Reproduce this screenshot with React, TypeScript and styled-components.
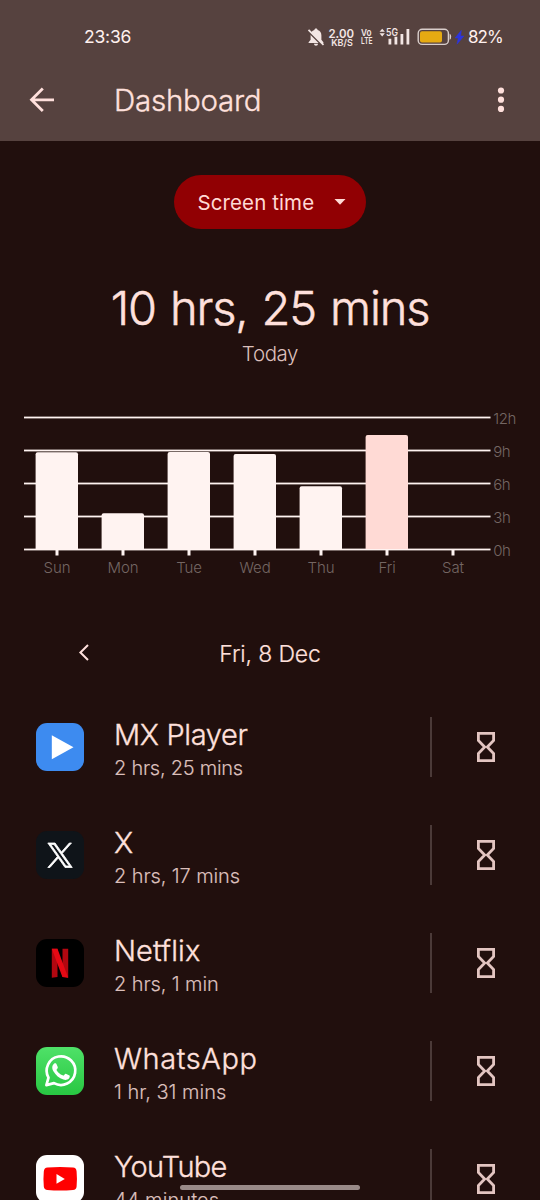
import React from "react";
import styled, { createGlobalStyle } from "styled-components";

const c = {
  bg: "#210f0d",
  bar: "#56423f",
  text: "#ffe0dc",
  sub: "#dbbfbb",
  grey: "#746663",
  line: "#fff3f1",
  red: "#910003",
};

const GlobalStyle = createGlobalStyle`
  * { box-sizing: border-box; }
  html, body { margin: 0; background: ${c.bg}; overflow: hidden; }
  button { border: 0; padding: 0; background: none; color: inherit; font: inherit; display: block; }
  svg { display: block; }
`;

const Screen = styled.div`
  width: 540px;
  height: 1200px;
  overflow: hidden;
  display: flex;
  flex-direction: column;
  background: ${c.bg};
  color: ${c.text};
  font-family: Inter, Roboto, sans-serif;
  font-weight: 340;
`;

const Label = styled.span<{ $size: number; $spacing?: number; $weight?: number }>`
  font-size: ${(p) => p.$size}px;
  letter-spacing: ${(p) => p.$spacing ?? 0}px;
  font-weight: ${(p) => p.$weight ?? 340};
  white-space: nowrap;
`;

const Header = styled.header`
  height: 141px;
  flex: none;
  background: ${c.bar};
`;

const StatusBar = styled.div`
  height: 73px;
  padding-left: 84px;
  display: grid;
  grid-template-columns: 221px 160px auto;
  align-items: center;
  color: #fff0ee;
`;

const Percent = styled.div`
  padding-left: 3px;
`;

const AppBar = styled.div`
  height: 54px;
  padding: 0 24px;
  display: flex;
  align-items: center;
`;

const Title = styled.h1`
  margin: 0 auto 0 54px;
  font-size: 29.5px;
  line-height: 36px;
  font-weight: 340;
  letter-spacing: -0.25px;
  -webkit-text-stroke: 0.35px currentColor;
`;

const Picker = styled.button`
  && {
    display: flex;
    align-items: center;
    justify-content: space-between;
    width: 192px;
    height: 54px;
    margin: 33.5px auto 0 174px;
    padding: 1px 20px 0 23.5px;
    border-radius: 27px;
    background: ${c.red};
    color: #ffdad5;
    flex: none;
  }
`;

const Summary = styled.section`
  display: flex;
  flex-direction: column;
  align-items: center;
  margin-top: 48.5px;
  height: 101px;
  flex: none;
`;

const Total = styled.div`
  font-size: 47px;
  line-height: 61px;
  letter-spacing: -1.15px;
  word-spacing: 2px;
  white-space: nowrap;
  -webkit-text-stroke: 0.5px currentColor;
`;

const Caption = styled.div`
  margin-top: 1px;
  font-size: 20.5px;
  line-height: 30px;
  letter-spacing: -0.4px;
  color: ${c.sub};
`;

const Chart = styled.svg`
  margin-top: 22px;
  flex: none;
  font-size: 15px;
  fill: ${c.grey};
`;

const DayNav = styled.nav`
  height: 66px;
  margin-top: 40px;
  padding: 0 72px;
  display: grid;
  grid-template-columns: 24px 1fr 24px;
  align-items: center;
  justify-items: center;
  flex: none;
`;

const DayLabel = styled.div`
  padding-top: 2px;
  font-size: 23px;
  letter-spacing: -0.15px;
  white-space: nowrap;
  -webkit-text-stroke: 0.2px currentColor;
`;

const List = styled.ul`
  list-style: none;
  margin: 7px 0 0;
  padding: 0;
`;

const Row = styled.li`
  height: 108px;
  padding-left: 36px;
  display: flex;
  align-items: center;
`;

const Names = styled.div`
  margin-left: 30px;
  padding-top: 6px;
  width: 316px;
  display: flex;
  flex-direction: column;
`;

const Name = styled.div<{ $spacing: number }>`
  font-size: 29px;
  line-height: 36px;
  letter-spacing: ${(p) => p.$spacing}px;
  -webkit-text-stroke: 0.35px currentColor;
`;

const Usage = styled.div<{ $spacing: number }>`
  font-size: 20px;
  line-height: 30px;
  letter-spacing: ${(p) => p.$spacing}px;
  color: ${c.sub};
  -webkit-text-stroke: 0.15px currentColor;
`;

const Timer = styled.button`
  && {
    width: 109px;
    height: 60px;
    border-left: 2px solid #4b3a38;
    display: flex;
    align-items: center;
    justify-content: center;
  }
`;

const HomePill = styled.div`
  position: absolute;
  left: 180px;
  top: 1185px;
  width: 180px;
  height: 5px;
  border-radius: 3px;
  background: #998a88;
`;

function Status() {
  return (
    <svg width="160" height="24" viewBox="305 24 160 24" fill="#f3e6e4" fontFamily="Inter, sans-serif">
      <path d="M316 27.500c1 0 1.600.7 1.600 1.600 2.600.7 3.800 2.800 3.800 5.400v4.200l2 2.500v.8h-14.800v-.8l2-2.500V34.500c0-2.600 1.200-4.700 3.800-5.400 0-.9.600-1.600 1.600-1.600zM314 42.800h4c0 1.200-.9 2-2 2s-2-.8-2-2z" />
      <path d="M308.500 30.500l14.500 14.500" stroke={c.bar} strokeWidth="2" />
      <path d="M308.500 28.800l15 15" stroke="#f3e6e4" strokeWidth="1.700" />
      <text x="328.500" y="36.800" fontSize="12.400" fontWeight="600" textLength="25.500" lengthAdjust="spacingAndGlyphs">2.00</text>
      <text x="331.300" y="45.300" fontSize="9.300" fontWeight="600" textLength="21.500" lengthAdjust="spacingAndGlyphs">KB/S</text>
      <text x="361" y="34.800" fontSize="9.500" fontWeight="600" textLength="10.500" lengthAdjust="spacingAndGlyphs">Vo</text>
      <text x="361" y="43.300" fontSize="9.500" fontWeight="600" textLength="11.500" lengthAdjust="spacingAndGlyphs">LTE</text>
      <path d="M379.500 30.800l2.700-3.100 2.700 3.100zM379.500 32.300l2.700 3.100 2.700-3.100z" />
      <text x="386" y="34.800" fontSize="10" fontWeight="600" textLength="12" lengthAdjust="spacingAndGlyphs">5G</text>
      <path d="M388.500 37.700h2.800v5.800h-2.800zM394.500 35.700h2.800v7.800h-2.800zM400.500 33h2.800v10.500h-2.800zM406.500 28h2.800v15.500h-2.800z" />
      <rect x="418.200" y="28.200" width="30.200" height="15.200" rx="4" fill="none" stroke="#d9cecb" strokeWidth="1.400" />
      <rect x="420" y="30.200" width="22" height="11.200" rx="2" fill="#e6aa12" />
      <path d="M449.600 32.800q1.600.4 1.600 3t-1.600 3z" fill="#d9cecb" />
      <path d="M461.300 29.300l-6.300 7.700h3.200l-1.200 6.200 7-8.200h-3.300z" fill="#2d35dd" stroke="#2d35dd" strokeWidth=".5" />
    </svg>
  );
}

const days = [
  { name: "Sun", top: 452.3 },
  { name: "Mon", top: 513.2 },
  { name: "Tue", top: 452 },
  { name: "Wed", top: 454 },
  { name: "Thu", top: 486.2 },
  { name: "Fri", top: 435, today: true },
  { name: "Sat", top: 549 },
];
const hours = ["12h", "9h", "6h", "3h", "0h"];

function WeekChart() {
  return (
    <Chart width="540" height="180" viewBox="0 400 540 180">
      {hours.map((h, i) => (
        <g key={h}>
          <rect x="24" y={416.6 + 33 * i} width="466.500" height="1.800" fill={c.line} />
          <text x="493.200" y={424 + 33 * i} letterSpacing="-.4">{h}</text>
        </g>
      ))}
      {days.map((d, i) => {
        const x = 57 + 66 * i;
        const h = 549 - d.top;
        return (
          <g key={d.name}>
            {h > 0 && (
              <path
                d={`M${x - 21.4} 549V${d.top + 2}q0-2 2-2h38.400q2 0 2 2V549z`}
                fill={d.today ? "#ffdad5" : c.line}
              />
            )}
            <rect x={x - 1.5} y="549" width="3" height="6.500" fill={c.line} />
            <text x={x} y="573.300" textAnchor="middle" letterSpacing="-.1">{d.name}</text>
          </g>
        );
      })}
    </Chart>
  );
}

const icons: Record<string, React.ReactNode> = {
  mx: (
    <>
      <rect width="48" height="48" rx="11" fill="#3d8bf0" />
      <path d="M15.800 12.300v24L37.500 24.300z" fill="#fff" />
    </>
  ),
  x: (
    <>
      <rect width="48" height="48" rx="11" fill="#0f1419" />
      <path
        transform="translate(11.800 12) scale(1.020)"
        d="M14.280 10.160 23.220 0H21.100l-7.760 8.820L7.150 0H0l9.370 13.350L0 24h2.120l8.190-9.320L16.850 24H24l-9.720-13.840zm-2.900 3.300-.95-1.330L2.880 1.560h3.250l6.100 8.530.95 1.330 7.920 11.090h-3.250l-6.470-9.050z"
        fill="#fff"
        stroke="#fff"
        strokeWidth=".8"
      />
    </>
  ),
  netflix: (
    <>
      <rect width="48" height="48" rx="11" fill="#000" />
      <path d="M15.800 9.800h5.700V38l-5.700.700zM26.500 9.800h5.700v28.900l-5.700-.7z" fill="#b20710" />
      <path d="M15.800 9.800h5.700l10.700 28.900c-2-.4-3.800-.6-5.800-.7z" fill="#e50914" />
    </>
  ),
  whatsapp: (
    <>
      <defs>
        <linearGradient id="wa" x1="0" y1="0" x2="0" y2="1">
          <stop offset="0" stopColor="#4fe168" />
          <stop offset="1" stopColor="#28c742" />
        </linearGradient>
      </defs>
      <rect width="48" height="48" rx="11" fill="url(#wa)" />
      <path d="M10.400 38.100l2.100-7.500A14.300 14.300 0 1 1 18 36.100z" fill="none" stroke="#fff" strokeWidth="2.700" strokeLinejoin="round" />
      <path
        d="M18.200 16.600c.5-.4 1.700-.5 2.100.1.500.9 1.100 2.400 1.500 3.500.3.900-1.300 2.200-1.300 2.600 0 .8 3.300 5 6.800 5.800.7.100 1.600-2.200 2.500-1.900l3.700 1.800c.6.300.1 2.400-.8 3.300-1.200 1.100-3.200 1.500-5.300.800-4.300-1.300-7.600-4.200-10-8.300-1.900-3-1.200-6.200.8-7.700z"
        fill="#fff"
      />
    </>
  ),
  youtube: (
    <>
      <rect width="48" height="48" rx="11" fill="#fff" />
      <path
        d="M11.500 12.600Q24 11.600 37 12.600q3.300.3 3.600 3.800.7 7.500 0 15-.3 3.400-3.600 3.700-13 1-25.500 0-3.300-.3-3.700-3.700-.7-7.500 0-15 .4-3.500 3.700-3.800z"
        fill="#f00"
      />
      <path d="M20.500 19v9.700l8.300-4.800z" fill="#fff" />
    </>
  ),
};

const apps = [
  { icon: "mx", name: "MX Player", usage: "2 hrs, 25 mins", ns: -0.35, us: -0.25 },
  { icon: "x", name: "X", usage: "2 hrs, 17 mins", ns: 0, us: -0.1 },
  { icon: "netflix", name: "Netflix", usage: "2 hrs, 1 min", ns: 0.1, us: -0.1 },
  { icon: "whatsapp", name: "WhatsApp", usage: "1 hr, 31 mins", ns: 0.6, us: 0 },
  { icon: "youtube", name: "YouTube", usage: "44 minutes", ns: -0.7, us: 0.1 },
];

export default function App() {
  return (
    <Screen>
      <GlobalStyle />
      <Header>
        <StatusBar>
          <Label $size={17.500} $weight={400} $spacing={-0.2}>23:36</Label>
          <Status />
          <Percent>
            <Label $size={17} $weight={400} $spacing={-0.9}>82%</Label>
          </Percent>
        </StatusBar>
        <AppBar>
          <button aria-label="Back">
            <svg width="36" height="36" fill="none" stroke={c.text} strokeWidth="2.800">
              <path d="M30 17.800H8M18.800 6.500L7.500 17.800l11.300 11.300" />
            </svg>
          </button>
          <Title>Dashboard</Title>
          <button aria-label="More options">
            <svg width="30" height="36" fill={c.text}>
              <circle cx="15" cy="8.500" r="3.100" />
              <circle cx="15" cy="17.700" r="3.100" />
              <circle cx="15" cy="26.900" r="3.100" />
            </svg>
          </button>
        </AppBar>
      </Header>
      <Picker>
        <Label $size={20.500} $weight={400} $spacing={0.1}>Screen time</Label>
        <svg width="12" height="6" fill="currentColor"><path d="M.5 0h11L6 5.800z" /></svg>
      </Picker>
      <Summary>
        <Total>10 hrs, 25 mins</Total>
        <Caption>Today</Caption>
      </Summary>
      <WeekChart />
      <DayNav>
        <button aria-label="Previous day">
          <svg width="24" height="24" fill="none" stroke={c.text} strokeWidth="2"><path d="M16 4l-7.600 7.500L16 19" /></svg>
        </button>
        <DayLabel>Fri, 8 Dec</DayLabel>
      </DayNav>
      <List>
        {apps.map((a) => (
          <Row key={a.name}>
            <svg width="48" height="48" viewBox="0 0 48 48">{icons[a.icon]}</svg>
            <Names>
              <Name $spacing={a.ns}>{a.name}</Name>
              <Usage $spacing={a.us}>{a.usage}</Usage>
            </Names>
            <Timer aria-label="Set app timer">
              <svg width="18" height="30" fill="none" stroke="#e3c5c1" strokeWidth="2.800">
                <path d="M1.400 1.400h15.200v7.100L10.300 15l6.300 6.500v7.100H1.400v-7.100L7.700 15 1.400 8.500z" />
              </svg>
            </Timer>
          </Row>
        ))}
      </List>
      <HomePill />
    </Screen>
  );
}
